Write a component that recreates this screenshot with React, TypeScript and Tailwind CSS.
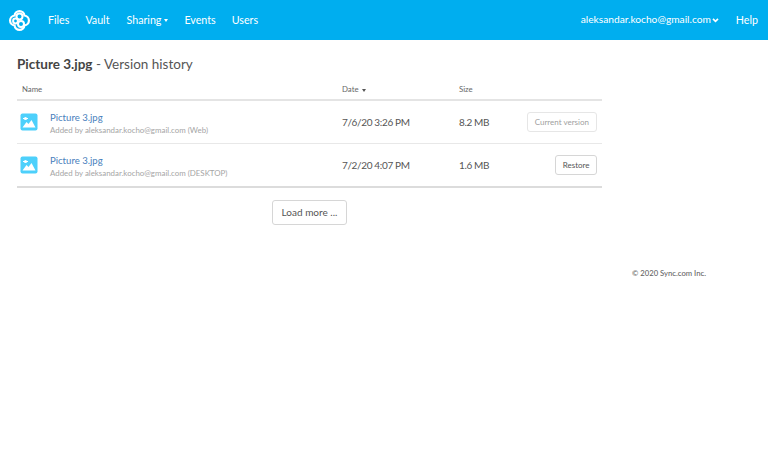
export default function App() {
  const navs = ["Files", "Vault", "Sharing", "Events", "Users"];
  const rows = [
    { by: "Web", date: "7/6/20 3:26 PM", size: "8.2 MB", current: true },
    { by: "DESKTOP", date: "7/2/20 4:07 PM", size: "1.6 MB", current: false },
  ];
  return (
    <div className="min-h-[469px] bg-white font-['Lato','Open_Sans',sans-serif] text-[#444]">
      <nav className="flex h-10 items-center bg-[#00aeef] pl-2 pr-[10px] text-[10.7px] text-white">
        <svg width="23" height="23" viewBox="0 0 23 23" fill="none" stroke="white" strokeWidth="2" className="mr-[17px]">
          <path d="M6.53 6.53 A5 5 0 0 1 16.47 6.53 A5 5 0 0 1 16.47 16.47 A5 5 0 0 1 6.53 16.47 A5 5 0 0 1 6.53 6.53 Z" strokeWidth="2.2" />
          <circle cx="11.5" cy="7.5" r="3" />
          <circle cx="7.5" cy="12" r="2.4" />
          <circle cx="13" cy="15" r="3" />
        </svg>
        <div className="flex gap-[16px]">
          {navs.map((n) => (
            <span key={n} className={`flex items-center ${n === "Sharing" ? "ml-[1px]" : ""}`}>
              {n}
              {n === "Sharing" && (
                <span className="ml-[3px] mt-[1px] h-0 w-0 border-x-[2.5px] border-t-[3px] border-x-transparent border-t-white" />
              )}
            </span>
          ))}
        </div>
        <div className="ml-auto flex items-center">
          <span className="text-[10.2px]">aleksandar.kocho@gmail.com</span>
          <svg width="7" height="5" viewBox="0 0 8 6" fill="none" stroke="white" strokeWidth="2" className="ml-[1px] mt-[1px]">
            <path d="M1 1 L4 4 L7 1" />
          </svg>
          <span className="ml-[17px]">Help</span>
        </div>
      </nav>

      <main className="pl-[17px]">
        <h1 className="mt-[14px] text-[13.5px] leading-[20px] text-[#555]">
          <span className="font-bold text-[#444]">Picture 3.jpg</span> - Version history
        </h1>

        <div className="mt-[7px] w-[585px]">
          <div className="grid h-[20px] grid-cols-[325px_117px_1fr] items-center border-b-2 border-[#e4e4e4] text-[7.8px] text-[#666]">
            <span className="pl-[5px]">Name</span>
            <span className="flex items-center">
              Date
              <span className="ml-[3px] mt-[1px] h-0 w-0 border-x-[2.5px] border-t-[3px] border-x-transparent border-t-[#555]" />
            </span>
            <span>Size</span>
          </div>

          {rows.map((r, i) => (
            <div
              key={r.by}
              className={`grid grid-cols-[325px_117px_1fr_auto] items-center pr-[5px] ${
                i === 0 ? "h-[43px] border-b border-[#e8e8e8]" : "h-[44px] border-b-2 border-[#dcdcdc]"
              }`}
            >
              <div className="flex items-center pl-[3px]">
                <svg width="18" height="18" viewBox="0 0 18 18" className="mr-[12px] shrink-0">
                  <rect width="17" height="17" x="0.5" y="0.5" rx="2" fill="#4dd0fb" />
                  <path d="M2.5 14.5 L6.5 9 L8.5 11 L11.5 7 L15.5 14.5 Z" fill="white" />
                  <circle cx="5.5" cy="5.5" r="1.6" fill="white" />
                  <rect x="3" y="5" width="5" height="1" fill="white" />
                </svg>
                <div className="pt-[2px]">
                  <div className="text-[9.6px] leading-[14px] text-[#4a7fbd]">Picture 3.jpg</div>
                  <div className="text-[7.9px] leading-[11px] text-[#a5a5a5]">
                    Added by aleksandar.kocho@gmail.com ({r.by})
                  </div>
                </div>
              </div>
              <span className="text-[10px] tracking-[-0.35px] text-[#555]">{r.date}</span>
              <span className="text-[10px] tracking-[-0.35px] text-[#555]">{r.size}</span>
              <button
                className={`flex h-[20px] items-center rounded-[3px] border bg-white text-[8px] ${
                  r.current
                    ? "border-[#e6e6e6] px-[7px] text-[#a0a0a0]"
                    : "border-[#d6d6d6] px-[6.5px] text-[#555]"
                }`}
              >
                {r.current ? "Current version" : "Restore"}
              </button>
            </div>
          ))}

          <div className="mt-[12px] flex justify-center">
            <button className="flex h-[25px] w-[75px] items-center justify-center rounded-[3px] border border-[#d6d6d6] bg-white text-[10px] text-[#555]">
              Load more ...
            </button>
          </div>
        </div>

        <footer className="mt-[41px] flex w-[689px] justify-end text-[7.7px] font-medium leading-[14px] text-[#666]">
          © 2020 Sync.com Inc.
        </footer>
      </main>
    </div>
  );
}
